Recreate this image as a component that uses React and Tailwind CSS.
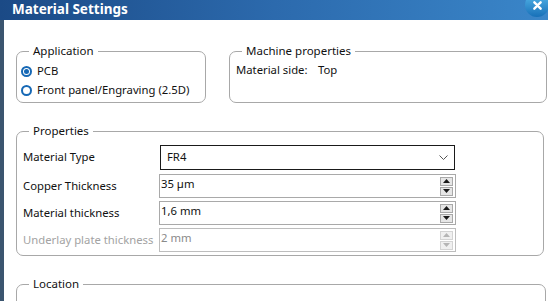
import React from 'react';

const font = { fontFamily: '"Noto Sans", "Open Sans", Arial, sans-serif' };

const Radio = ({ checked, children }) => (
  <label className="flex items-center h-[19px] gap-[5px] whitespace-nowrap">
    <span className="w-[11px] h-[11px] rounded-full border-[2px] border-[#1668b5] flex items-center justify-center">
      {checked && <span className="w-[5px] h-[5px] rounded-full bg-[#1668b5]" />}
    </span>
    <span>{children}</span>
  </label>
);

const Group = ({ title, className = '', children }) => (
  <fieldset className={`border border-[#a8a8a8] rounded-[7px] ${className}`}>
    <legend className="ml-[12px] px-[4px] leading-[16px] text-[11.5px]">{title}</legend>
    {children}
  </fieldset>
);

const Spinner = ({ disabled }) => {
  const btn = disabled ? 'border-[#d4d4d4] bg-[#f0f0f0]' : 'border-[#a9a9a9] bg-[#e6e6e6]';
  const tri = disabled ? '#b5b5b5' : '#1a1a1a';
  return (
    <div className="flex flex-col gap-[1px] mr-[2px]">
      <div className={`w-[13px] h-[9px] border ${btn} flex items-center justify-center`}>
        <svg width="7" height="4" viewBox="0 0 7 4"><path d="M0 4 L3.5 0 L7 4 Z" fill={tri} /></svg>
      </div>
      <div className={`w-[13px] h-[9px] border ${btn} flex items-center justify-center`}>
        <svg width="7" height="4" viewBox="0 0 7 4"><path d="M0 0 L3.5 4 L7 0 Z" fill={tri} /></svg>
      </div>
    </div>
  );
};

const NumberRow = ({ label, value, disabled }) => (
  <div className="flex items-center h-[24px]">
    <span className={`w-[136px] whitespace-nowrap ${disabled ? 'text-[#a3a3a3]' : 'text-[#111]'}`}>{label}</span>
    <div className={`w-[297px] h-[24px] border flex items-center justify-between ${disabled ? 'border-[#bdbdbd] text-[#8a8a8a]' : 'border-[#a9a9a9] text-[#111]'}`}>
      <span className="pl-[1px] -mt-[3px]">{value}</span>
      <Spinner disabled={disabled} />
    </div>
  </div>
);

export default function App() {
  return (
    <div className="w-[548px] h-[301px] overflow-hidden bg-white flex flex-col text-[11.3px] text-[#111]" style={font}>
      <div className="h-[20px] shrink-0 flex items-center justify-between bg-gradient-to-r from-[#1b4a86] via-[#2c6aad] to-[#3a86c9] pl-[12px] overflow-hidden">
        <span className="text-white font-bold text-[13.5px] leading-none">Material Settings</span>
        <div className="w-[24px] h-[24px] -mt-[10px] -mr-[1px] rounded-full bg-gradient-to-b from-[#56b8ea] to-[#1670b8] flex items-end justify-center pb-[7px]">
          <svg width="9" height="9" viewBox="0 0 10 10">
            <path d="M1.5 1.5 L8.5 8.5 M8.5 1.5 L1.5 8.5" stroke="white" strokeWidth="2.6" strokeLinecap="round" />
          </svg>
        </div>
      </div>
      <div className="flex flex-1">
        <div className="w-[4px] bg-[#3b556f]" />
        <div className="flex-1 pl-[12px] pt-[23px]">
          <div className="flex gap-[23px]">
            <Group title="Application" className="w-[190px] h-[60px]">
              <div className="pl-[4px] pt-[3px]">
                <Radio checked>PCB</Radio>
                <Radio>Front panel/Engraving (2.5D)</Radio>
              </div>
            </Group>
            <Group title="Machine properties" className="w-[318px] h-[60px]">
              <div className="flex items-center h-[19px] pl-[6px] pt-[3px]">
                <span className="w-[82px]">Material side:</span>
                <span>Top</span>
              </div>
            </Group>
          </div>
          <Group title="Properties" className="w-[528px] h-[133px] mt-[20px]">
            <div className="pl-[6px] pt-[6px] flex flex-col gap-[3px]">
              <div className="flex items-center h-[25px] mb-[1px]">
                <span className="w-[137px]">Material Type</span>
                <div className="w-[295px] h-[25px] border border-[#1a1a1a] flex items-center justify-between pl-[6px] pr-[6px]">
                  <span>FR4</span>
                  <svg width="9" height="5" viewBox="0 0 9 5">
                    <path d="M0.5 0.5 L4.5 4.5 L8.5 0.5" stroke="#555" strokeWidth="1" fill="none" />
                  </svg>
                </div>
              </div>
              <NumberRow label="Copper Thickness" value="35 µm" />
              <NumberRow label="Material thickness" value="1,6 mm" />
              <NumberRow label="Underlay plate thickness" value="2 mm" disabled />
            </div>
          </Group>
          <Group title="Location" className="w-[530px] h-[60px] mt-[20px]">
            <div />
          </Group>
        </div>
      </div>
    </div>
  );
}
